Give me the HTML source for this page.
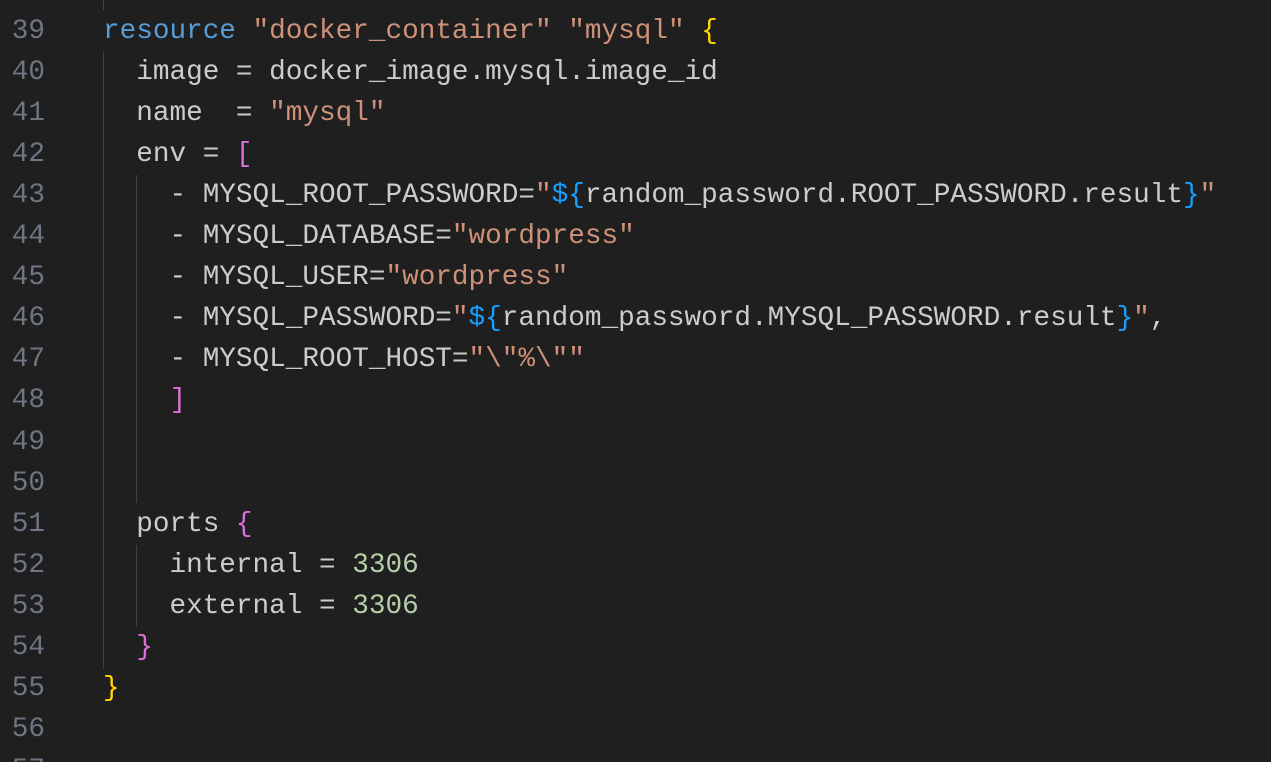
<!DOCTYPE html>
<html style="overflow:hidden;height:762px"><head><style>
body{margin:0;width:1271px;height:762px;background:#1f1f1f;overflow:hidden;position:relative;font-family:"Liberation Mono","DejaVu Sans Mono",monospace;font-size:27.7px;}
.ln{position:absolute;left:0;width:45px;text-align:right;color:#6e7681;height:41.1px;line-height:41.1px}
.c{position:absolute;left:103px;white-space:pre;color:#cccccc;height:41.1px;line-height:41.1px}
.g{position:absolute;width:1px;background:#404040}
.k{color:#569cd6}.s{color:#ce9178}.n{color:#b5cea8}.y{color:#ffd700}.p{color:#da70d6}.b{color:#179fff}
</style></head><body>
<div class="g" style="left:103px;top:0;height:10px"></div>
<div class="g" style="left:103px;top:52px;height:617px"></div>
<div class="g" style="left:136px;top:175px;height:328px"></div>
<div class="g" style="left:136px;top:545px;height:82px"></div>
<div class="ln" style="top:10.5px">39</div><div class="c" style="top:10.5px"><span class="k">resource</span> <span class="s">"docker_container"</span> <span class="s">"mysql"</span> <span class="y">{</span></div>
<div class="ln" style="top:51.6px">40</div><div class="c" style="top:51.6px">  image = docker_image.mysql.image_id</div>
<div class="ln" style="top:92.7px">41</div><div class="c" style="top:92.7px">  name  = <span class="s">"mysql"</span></div>
<div class="ln" style="top:133.8px">42</div><div class="c" style="top:133.8px">  env = <span class="p">[</span></div>
<div class="ln" style="top:174.9px">43</div><div class="c" style="top:174.9px">    - MYSQL_ROOT_PASSWORD=<span class="s">"</span><span class="b">${</span>random_password.ROOT_PASSWORD.result<span class="b">}</span><span class="s">"</span></div>
<div class="ln" style="top:216px">44</div><div class="c" style="top:216px">    - MYSQL_DATABASE=<span class="s">"wordpress"</span></div>
<div class="ln" style="top:257.1px">45</div><div class="c" style="top:257.1px">    - MYSQL_USER=<span class="s">"wordpress"</span></div>
<div class="ln" style="top:298.2px">46</div><div class="c" style="top:298.2px">    - MYSQL_PASSWORD=<span class="s">"</span><span class="b">${</span>random_password.MYSQL_PASSWORD.result<span class="b">}</span><span class="s">"</span>,</div>
<div class="ln" style="top:339.3px">47</div><div class="c" style="top:339.3px">    - MYSQL_ROOT_HOST=<span class="s">"\"%\""</span></div>
<div class="ln" style="top:380.4px">48</div><div class="c" style="top:380.4px">    <span class="p">]</span></div>
<div class="ln" style="top:421.5px">49</div>
<div class="ln" style="top:462.6px">50</div>
<div class="ln" style="top:503.7px">51</div><div class="c" style="top:503.7px">  ports <span class="p">{</span></div>
<div class="ln" style="top:544.8px">52</div><div class="c" style="top:544.8px">    internal = <span class="n">3306</span></div>
<div class="ln" style="top:585.9px">53</div><div class="c" style="top:585.9px">    external = <span class="n">3306</span></div>
<div class="ln" style="top:627px">54</div><div class="c" style="top:627px">  <span class="p">}</span></div>
<div class="ln" style="top:668.1px">55</div><div class="c" style="top:668.1px"><span class="y">}</span></div>
<div class="ln" style="top:709.2px">56</div>
<div class="ln" style="top:750.3px;height:11.7px;overflow:hidden">57</div>
</body></html>
